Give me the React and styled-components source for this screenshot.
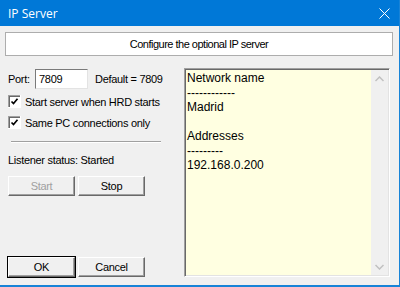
import React from "react";
import styled, { createGlobalStyle } from "styled-components";

const Global = createGlobalStyle`
  html, body { margin: 0; padding: 0; background: #f0f0f0; }
  body { font-family: "Liberation Sans", Arial, sans-serif; }
`;

const Window = styled.div`
  width: 400px;
  height: 287px;
  box-sizing: border-box;
  border-right: 1px solid #1883d7;
  border-bottom: 2px solid #1883d7;
  background: #f0f0f0;
  display: flex;
  flex-direction: column;
  overflow: hidden;
`;

const TitleBar = styled.div`
  height: 26px;
  flex: none;
  background: #0078d7;
  display: flex;
  align-items: center;
  justify-content: space-between;
  padding-left: 8px;
  color: #fff;
  font-family: "Open Sans", "Noto Sans", sans-serif;
  font-size: 12px;
`;

const CloseBox = styled.div`
  width: 30px;
  height: 26px;
  display: flex;
  align-items: center;
  justify-content: center;
`;

const Header = styled.div`
  margin: 6px 0 0 5px;
  width: 388px;
  height: 24px;
  box-sizing: border-box;
  background: #fff;
  border: 1px solid #adadad;
  display: flex;
  align-items: center;
  justify-content: center;
  font-size: 11px;
  letter-spacing: -0.5px;
  color: #000;
`;

const Main = styled.div`
  display: flex;
  padding-left: 8px;
  flex: 1;
`;

const LeftCol = styled.div`
  width: 176px;
  display: flex;
  flex-direction: column;
  font-size: 11px;
  letter-spacing: -0.3px;
  color: #000;
`;

const PortRow = styled.div`
  margin-top: 13px;
  height: 20px;
  display: flex;
  align-items: center;
`;

const PortLabel = styled.span`
  width: 27px;
`;

const Input = styled.div`
  width: 53px;
  height: 20px;
  box-sizing: border-box;
  background: #fff;
  border-top: 1px solid #7a7a7a;
  border-left: 1px solid #7a7a7a;
  border-right: 1px solid #e3e3e3;
  border-bottom: 1px solid #e3e3e3;
  display: flex;
  align-items: center;
  padding-left: 3px;
  font-size: 11px;
`;

const DefaultText = styled.span`
  margin-left: 7px;
`;

const CheckRow = styled.div`
  margin-top: ${(p) => p.$mt}px;
  height: 13px;
  display: flex;
  align-items: center;
  gap: 4px;
`;

const Separator = styled.div`
  margin: 12px 0 0 3px;
  width: 150px;
  height: 1px;
  background: #a0a0a0;
  border-bottom: 1px solid #fff;
`;

const Status = styled.div`
  margin-top: 11px;
  height: 13px;
  line-height: 13px;
`;

const ButtonRow = styled.div`
  margin-top: ${(p) => p.$mt}px;
  display: flex;
  gap: 3px;
`;

const Button = styled.div`
  width: 67px;
  height: 20px;
  box-sizing: border-box;
  display: flex;
  align-items: center;
  justify-content: center;
  font-size: 11px;
  background: #f0f0f0;
  color: ${(p) => (p.$disabled ? "#a0a0a0" : "#000")};
  border-top: 1px solid #fff;
  border-left: 1px solid #fff;
  border-right: 1px solid #696969;
  border-bottom: 1px solid #696969;
  box-shadow: ${(p) =>
    p.$default
      ? "0 0 0 1px #000, inset -1px -1px 0 #a0a0a0"
      : "inset -1px -1px 0 #a0a0a0"};
`;

const TextArea = styled.div`
  margin: 12px 0 0 0;
  width: 206px;
  height: 209px;
  box-sizing: border-box;
  background: #ffffe1;
  border-top: 1px solid #a0a0a0;
  border-left: 1px solid #a0a0a0;
  border-right: 1px solid #fff;
  border-bottom: 1px solid #fff;
  box-shadow: inset 1px 1px 0 #696969, inset -1px -1px 0 #e3e3e3;
  display: flex;
`;

const TextContent = styled.div`
  flex: 1;
  padding: 2px 0 0 2px;
  font-size: 12px;
  line-height: 14.5px;
  color: #000;
  white-space: pre;
`;

const ScrollBar = styled.div`
  width: 17px;
  margin: 1px 1px 1px 0;
  background: #f0f0f0;
  display: flex;
  flex-direction: column;
  justify-content: space-between;
  align-items: center;
`;

const Arrow = styled.div`
  height: 17px;
  display: flex;
  align-items: center;
  justify-content: center;
`;

function CheckBox() {
  return (
    <svg width="13" height="13" viewBox="0 0 13 13">
      <rect x="0" y="0" width="13" height="13" fill="#a0a0a0" />
      <rect x="1" y="1" width="12" height="12" fill="#fff" />
      <rect x="1" y="1" width="11" height="11" fill="#696969" />
      <rect x="2" y="2" width="10" height="10" fill="#fff" />
      <rect x="12" y="0" width="1" height="13" fill="#fff" />
      <rect x="0" y="12" width="13" height="1" fill="#fff" />
      <path d="M3.5 6.5 L5.5 8.5 L9.5 3.8" stroke="#000" strokeWidth="1.7" fill="none" />
    </svg>
  );
}

const text = `Network name
------------
Madrid

Addresses
---------
192.168.0.200`;

export default function App() {
  return (
    <>
      <Global />
      <Window>
        <TitleBar>
          <span>IP Server</span>
          <CloseBox>
            <svg width="11" height="11" viewBox="0 0 11 11">
              <path d="M0.5 0.5 L10.5 10.5 M10.5 0.5 L0.5 10.5" stroke="#fff" strokeWidth="1" />
            </svg>
          </CloseBox>
        </TitleBar>
        <Header>Configure the optional IP server</Header>
        <Main>
          <LeftCol>
            <PortRow>
              <PortLabel>Port:</PortLabel>
              <Input>7809</Input>
              <DefaultText>Default = 7809</DefaultText>
            </PortRow>
            <CheckRow $mt={6}>
              <CheckBox />
              <span>Start server when HRD starts</span>
            </CheckRow>
            <CheckRow $mt={8}>
              <CheckBox />
              <span>Same PC connections only</span>
            </CheckRow>
            <Separator />
            <Status>Listener status: Started</Status>
            <ButtonRow $mt={9}>
              <Button $disabled>Start</Button>
              <Button>Stop</Button>
            </ButtonRow>
            <ButtonRow $mt={61}>
              <Button $default>OK</Button>
              <Button>Cancel</Button>
            </ButtonRow>
          </LeftCol>
          <TextArea>
            <TextContent>{text}</TextContent>
            <ScrollBar>
              <Arrow>
                <svg width="9" height="6" viewBox="0 0 9 6">
                  <path d="M0.5 5 L4.5 1 L8.5 5" stroke="#c0c0c0" strokeWidth="1.5" fill="none" />
                </svg>
              </Arrow>
              <Arrow>
                <svg width="9" height="6" viewBox="0 0 9 6">
                  <path d="M0.5 1 L4.5 5 L8.5 1" stroke="#c0c0c0" strokeWidth="1.5" fill="none" />
                </svg>
              </Arrow>
            </ScrollBar>
          </TextArea>
        </Main>
      </Window>
    </>
  );
}
